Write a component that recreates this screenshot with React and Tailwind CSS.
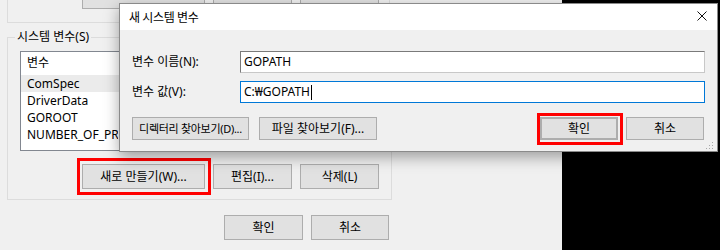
import React from "react";

const FONT = "font-['Noto_Sans','Noto_Sans_CJK_KR',sans-serif]";

function Btn({ children, className = "", size = "text-[12px]" }) {
  return (
    <div
      className={`relative flex shrink-0 items-center justify-center whitespace-nowrap border border-[#adadad] bg-[#e1e1e1] leading-none text-black ${size} ${className}`}
    >
      {children}
    </div>
  );
}

function RedMark({ className = "" }) {
  return (
    <span
      className={`pointer-events-none absolute border-[3px] border-[#ff0000] ${className}`}
    />
  );
}

export default function App() {
  const rows = ["ComSpec", "DriverData", "GOROOT", "NUMBER_OF_PRO..."];
  return (
    <div className={`relative flex h-[250px] w-[720px] overflow-hidden bg-[#f0f0f0] ${FONT} text-[12px] text-black`}>
      {/* background window */}
      <div className="flex w-[562px] shrink-0 flex-col">
        {/* upper group box (only its bottom is visible) */}
        <div className="ml-[7px] h-[23px] w-[383px] border-x border-b border-[#dcdcdc]">
          <div className="ml-[74px] mt-[-15px] flex h-[24px] gap-[8px]">
            <Btn className="w-[123px]" />
            <Btn className="w-[79px]" />
            <Btn className="w-[79px]" />
          </div>
        </div>

        {/* system variables group box */}
        <fieldset className="ml-[7px] mt-[6px] w-[383px] border border-[#dcdcdc] px-[12px] pb-[10px] pt-[6px]">
          <legend className="ml-[-5px] px-[2px] text-[12px] leading-[16px]">시스템 변수(S)</legend>
          <div className="flex h-[100px] flex-col border border-[#828790] bg-white">
            <div className="flex h-[23px] items-center pl-[6px] pb-[1px]">변수</div>
            {rows.map((r, i) => (
              <div
                key={r}
                className={`flex h-[17px] items-center pl-[6px] ${i === 0 ? "bg-[#ebebeb]" : ""}`}
              >
                <span className="w-[91px] overflow-hidden whitespace-nowrap">{r}</span>
              </div>
            ))}
          </div>
          <div className="ml-[62px] mt-[13px] flex h-[25px] gap-[8px]">
            <Btn className="w-[123px]">
              새로 만들기(W)...
              <RedMark className="-bottom-[7px] -left-[6px] -right-[7px] -top-[7px]" />
            </Btn>
            <Btn className="w-[79px]">편집(I)...</Btn>
            <Btn className="w-[79px]">삭제(L)</Btn>
          </div>
        </fieldset>

        <div className="ml-[224px] mt-[15px] flex h-[25px] gap-[8px]">
          <Btn className="w-[79px]">확인</Btn>
          <Btn className="w-[78px]">취소</Btn>
        </div>
      </div>
      <div className="flex-1 bg-black" />

      {/* dialog window */}
      <div className="absolute left-[119px] top-[3px] flex h-[149px] w-[599px] flex-col border border-[#8a8a8a] bg-[#f0f0f0] shadow-[0_5px_14px_rgba(0,0,0,0.35)]">
        <div className="flex h-[26px] shrink-0 items-center justify-between bg-white pl-[9px] pr-[10px]">
          <span className="mt-[1px] text-[12px] tracking-[-0.4px]">새 시스템 변수</span>
          <svg width="10" height="10" viewBox="0 0 10 10" className="mt-[-2px]">
            <path d="M0.5 0.5 L9.5 9.5 M9.5 0.5 L0.5 9.5" stroke="#111" strokeWidth="1" fill="none" />
          </svg>
        </div>
        <div className="relative flex flex-1 flex-col px-[12px] pt-[21px]">
          <div className="flex h-[22px] items-center">
            <span className="w-[108px] shrink-0">변수 이름(N):</span>
            <div className="flex h-full flex-1 items-center border border-[#7a7a7a] border-b-[#c8c8c8] border-r-[#c8c8c8] bg-white pl-[3px]">
              GOPATH
            </div>
          </div>
          <div className="mt-[8px] flex h-[22px] items-center">
            <span className="w-[108px] shrink-0">변수 값(V):</span>
            <div className="flex h-full flex-1 items-center border border-[#0078d7] bg-white pl-[3px]">
              C:₩GOPATH
              <span className="ml-[1px] h-[15px] w-px bg-black" />
            </div>
          </div>
          <div className="mt-[14px] flex h-[23px] pr-[1px]">
            <Btn className="w-[117px] tracking-[-0.3px]" size="text-[11px]">디렉터리 찾아보기(D)...</Btn>
            <Btn className="ml-[10px] w-[118px]">파일 찾아보기(F)...</Btn>
            <div className="flex-1" />
            <Btn className="w-[78px] border-2 border-[#0078d7]">
              확인
              <RedMark className="-bottom-[7px] -left-[5px] -right-[7px] -top-[6px]" />
            </Btn>
            <Btn className="ml-[8px] w-[78px]">취소</Btn>
          </div>
          <svg width="8" height="8" viewBox="0 0 8 8" className="absolute bottom-[1px] right-[3px]">
            <rect x="6" y="0" width="1" height="1" fill="#a8a8a8" />
            <rect x="3" y="3" width="1" height="1" fill="#a8a8a8" />
            <rect x="6" y="3" width="1" height="1" fill="#a8a8a8" />
            <rect x="0" y="6" width="1" height="1" fill="#a8a8a8" />
            <rect x="3" y="6" width="1" height="1" fill="#a8a8a8" />
            <rect x="6" y="6" width="1" height="1" fill="#a8a8a8" />
          </svg>
        </div>
      </div>
    </div>
  );
}
